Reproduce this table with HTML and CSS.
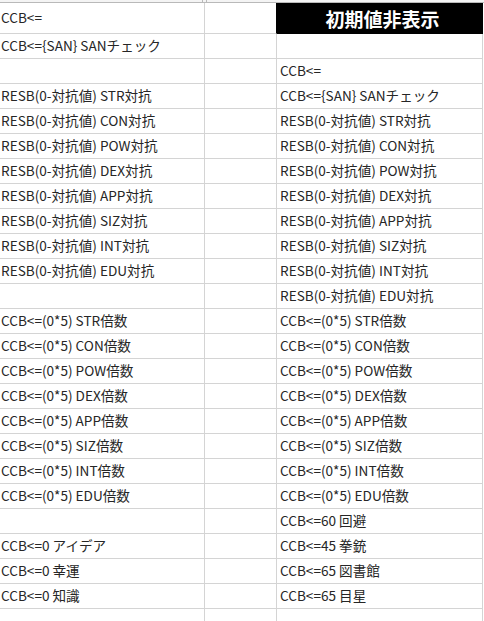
FILE: index.html
```html
<!DOCTYPE html>
<html lang="ja">
<head>
<meta charset="utf-8">
<title>Sheet</title>
<link rel="stylesheet" href="styles.css">
</head>
<body>
<div class="sheet">
  <div class="colhead">
    <span class="tick t1"></span><span class="tick t2"></span>
  </div>
  <div class="grid">
    <div class="row first"><div class="c a">CCB&lt;=</div><div class="c b"></div><div class="c d title">初期値非表示</div></div>
    <div class="row"><div class="c a">CCB&lt;={SAN} SANチェック</div><div class="c b"></div><div class="c d"></div></div>
    <div class="row"><div class="c a"></div><div class="c b"></div><div class="c d">CCB&lt;=</div></div>
    <div class="row"><div class="c a">RESB(0-対抗値) STR対抗</div><div class="c b"></div><div class="c d">CCB&lt;={SAN} SANチェック</div></div>
    <div class="row"><div class="c a">RESB(0-対抗値) CON対抗</div><div class="c b"></div><div class="c d">RESB(0-対抗値) STR対抗</div></div>
    <div class="row"><div class="c a">RESB(0-対抗値) POW対抗</div><div class="c b"></div><div class="c d">RESB(0-対抗値) CON対抗</div></div>
    <div class="row"><div class="c a">RESB(0-対抗値) DEX対抗</div><div class="c b"></div><div class="c d">RESB(0-対抗値) POW対抗</div></div>
    <div class="row"><div class="c a">RESB(0-対抗値) APP対抗</div><div class="c b"></div><div class="c d">RESB(0-対抗値) DEX対抗</div></div>
    <div class="row"><div class="c a">RESB(0-対抗値) SIZ対抗</div><div class="c b"></div><div class="c d">RESB(0-対抗値) APP対抗</div></div>
    <div class="row"><div class="c a">RESB(0-対抗値) INT対抗</div><div class="c b"></div><div class="c d">RESB(0-対抗値) SIZ対抗</div></div>
    <div class="row"><div class="c a">RESB(0-対抗値) EDU対抗</div><div class="c b"></div><div class="c d">RESB(0-対抗値) INT対抗</div></div>
    <div class="row"><div class="c a"></div><div class="c b"></div><div class="c d">RESB(0-対抗値) EDU対抗</div></div>
    <div class="row"><div class="c a">CCB&lt;=(0*5) STR倍数</div><div class="c b"></div><div class="c d">CCB&lt;=(0*5) STR倍数</div></div>
    <div class="row"><div class="c a">CCB&lt;=(0*5) CON倍数</div><div class="c b"></div><div class="c d">CCB&lt;=(0*5) CON倍数</div></div>
    <div class="row"><div class="c a">CCB&lt;=(0*5) POW倍数</div><div class="c b"></div><div class="c d">CCB&lt;=(0*5) POW倍数</div></div>
    <div class="row"><div class="c a">CCB&lt;=(0*5) DEX倍数</div><div class="c b"></div><div class="c d">CCB&lt;=(0*5) DEX倍数</div></div>
    <div class="row"><div class="c a">CCB&lt;=(0*5) APP倍数</div><div class="c b"></div><div class="c d">CCB&lt;=(0*5) APP倍数</div></div>
    <div class="row"><div class="c a">CCB&lt;=(0*5) SIZ倍数</div><div class="c b"></div><div class="c d">CCB&lt;=(0*5) SIZ倍数</div></div>
    <div class="row"><div class="c a">CCB&lt;=(0*5) INT倍数</div><div class="c b"></div><div class="c d">CCB&lt;=(0*5) INT倍数</div></div>
    <div class="row"><div class="c a">CCB&lt;=(0*5) EDU倍数</div><div class="c b"></div><div class="c d">CCB&lt;=(0*5) EDU倍数</div></div>
    <div class="row"><div class="c a"></div><div class="c b"></div><div class="c d">CCB&lt;=60 回避</div></div>
    <div class="row"><div class="c a">CCB&lt;=0 アイデア</div><div class="c b"></div><div class="c d">CCB&lt;=45 拳銃</div></div>
    <div class="row"><div class="c a">CCB&lt;=0 幸運</div><div class="c b"></div><div class="c d">CCB&lt;=65 図書館</div></div>
    <div class="row"><div class="c a">CCB&lt;=0 知識</div><div class="c b"></div><div class="c d">CCB&lt;=65 目星</div></div>
    <div class="row"><div class="c a"></div><div class="c b"></div><div class="c d"></div></div>
  </div>
</div>
</body>
</html>
```
FILE: styles.css
```css
* { box-sizing: border-box; }
html, body {
  margin: 0;
  padding: 0;
  background: #ffffff;
}
body {
  font-family: "Noto Sans CJK JP", "Noto Sans", sans-serif;
  font-size: 13.6px;
  color: #262626;
  overflow: hidden;
}
.sheet {
  width: 484px;
}
.colhead {
  position: relative;
  height: 3px;
  background: #f4f4f4;
  border-bottom: 1px solid #b9b9b9;
}
.tick {
  position: absolute;
  top: 0;
  width: 1px;
  height: 2px;
  background: #b9b9b9;
}
.t1 { left: 202px; }
.t2 { left: 206px; }
.grid {
  display: flex;
  flex-direction: column;
}
.row {
  display: grid;
  grid-template-columns: 205px 72px 206px;
  height: 25px;
}
.row.first {
  height: 31px;
}
.c {
  border-right: 1px solid #d4d4d4;
  border-bottom: 1px solid #d4d4d4;
  display: flex;
  align-items: center;
  padding-left: 1px;
  white-space: nowrap;
  overflow: hidden;
  line-height: 1;
}
.d {
  padding-left: 3px;
}
.first .b {
  border-right-color: #000;
}
.title {
  background: #000;
  color: #fff;
  border-color: #000;
  justify-content: center;
  font-weight: 700;
  font-size: 19px;
  padding-left: 6px;
}
```
